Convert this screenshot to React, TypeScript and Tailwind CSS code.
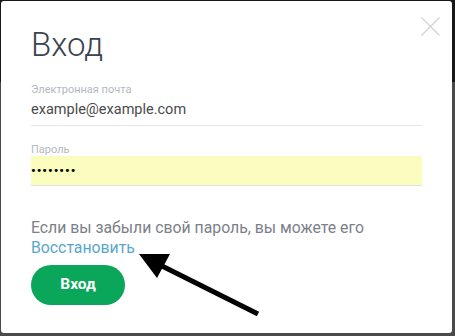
import React from "react";

export default function App() {
  return (
    <div className="relative w-[455px] h-[336px] overflow-hidden bg-[linear-gradient(#181818_82px,#4a4a4a_82px)] pt-[1px] pl-[1px] pr-[3px] pb-[3px] font-['Roboto',sans-serif]">
      {/* Modal */}
      <div className="relative h-full bg-white rounded-[3px] px-[30px]">
        {/* Close */}
        <button className="absolute left-[420px] top-[16px] w-[19px] h-[19px]">
          <svg width="19" height="19" viewBox="0 0 19 19">
            <path d="M0.5 0.5 L18.5 18.5 M18.5 0.5 L0.5 18.5" stroke="#d2d2d2" strokeWidth="1.2" />
          </svg>
        </button>

        <h1 className="pt-[24px] text-[33px] leading-[40px] font-light text-[#3b4350]">Вход</h1>

        {/* Email */}
        <div className="mt-[19px] text-[11px] leading-[12px] text-[#b3b8bf]">Электронная почта</div>
        <div className="pt-[4px] pb-[5px] border-b border-[#e6e6e6] text-[14.5px] leading-[20px] text-[#4a4a4a]">
          example@example.com
        </div>

        {/* Password */}
        <div className="mt-[18px] text-[11px] leading-[12px] text-[#b3b8bf]">Пароль</div>
        <div className="h-[30px] flex items-center bg-[#fafdbd] border-b border-[#e2e2e2] text-[13px] font-bold tracking-[1px] text-black">
          ••••••••
        </div>

        {/* Forgot */}
        <p className="mt-[32px] text-[15.8px] leading-[20px] text-[#7b8089]">
          Если вы забыли свой пароль, вы можете его
          <br />
          <a className="text-[#5aa6cb]">Восстановить</a>
        </p>

        <button className="mt-[7px] w-[94px] h-[40px] rounded-full bg-[#0aa65a] text-white text-[15.5px] font-bold">
          Вход
        </button>
      </div>

      {/* Annotation arrow */}
      <svg className="absolute left-0 top-0 pointer-events-none" width="455" height="336" viewBox="0 0 455 336">
        <line x1="160" y1="265" x2="258" y2="314" stroke="#000" strokeWidth="5" />
        <polygon points="139,254 170,254 157,278" fill="#000" />
      </svg>
    </div>
  );
}
